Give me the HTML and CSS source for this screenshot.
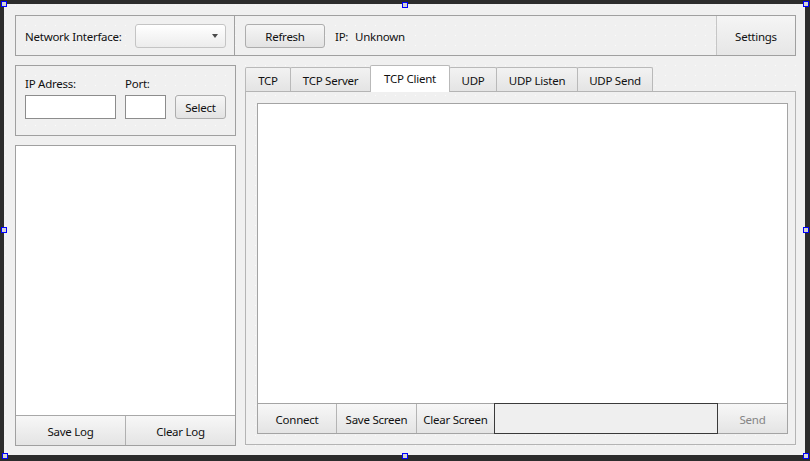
FILE: index.html
```html
<!DOCTYPE html>
<html>
<head>
<meta charset="utf-8">
<link rel="stylesheet" href="styles.css">
</head>
<body>
<div class="form">
  <div class="topbar">
    <div class="cell cell-iface">
      <span class="lbl-iface">Network Interface:</span>
      <div class="combo"><span class="arrow"></span></div>
    </div>
    <div class="cell cell-ip">
      <div class="btn btn-refresh">Refresh</div>
      <span class="ip-lbl">IP:</span>
      <span>Unknown</span>
    </div>
    <div class="settings">Settings</div>
  </div>
  <div class="main">
    <div class="leftcol">
      <div class="ipbox">
        <span class="lbl">IP Adress:</span>
        <span class="lbl">Port:</span>
        <span></span>
        <div class="edit"></div>
        <div class="edit"></div>
        <div class="btn">Select</div>
      </div>
      <div class="logbox">
        <div class="logarea"></div>
        <div class="logbtns">
          <div class="flatbtn">Save Log</div>
          <div class="flatbtn">Clear Log</div>
        </div>
      </div>
    </div>
    <div class="tabwidget">
      <div class="tabbar">
        <div class="tab w-tcp">TCP</div>
        <div class="tab w-tcps">TCP Server</div>
        <div class="tab tab-sel w-tcpc">TCP Client</div>
        <div class="tab w-udp">UDP</div>
        <div class="tab w-udpl">UDP Listen</div>
        <div class="tab w-udps">UDP Send</div>
      </div>
      <div class="pane">
        <div class="console">
          <div class="screen"></div>
          <div class="cmdrow">
            <div class="flatbtn b-connect">Connect</div>
            <div class="flatbtn b-save">Save Screen</div>
            <div class="flatbtn b-clear">Clear Screen</div>
            <div class="cmdinput"></div>
            <div class="flatbtn b-send">Send</div>
          </div>
        </div>
      </div>
    </div>
  </div>
</div>
<span class="handle h-tl"></span>
<span class="handle h-tm"></span>
<span class="handle h-tr"></span>
<span class="handle h-ml"></span>
<span class="handle h-mr"></span>
<span class="handle h-bl"></span>
<span class="handle h-bm"></span>
<span class="handle h-br"></span>
</body>
</html>
```

FILE: styles.css
```css
* { box-sizing: border-box; }
html, body {
  margin: 0;
  width: 810px;
  height: 461px;
  overflow: hidden;
  background: #2c2c2c;
  font-family: "Noto Sans", "Open Sans", sans-serif;
  font-size: 11.5px;
  letter-spacing: -0.25px;
  color: #111;
}
body { position: relative; padding: 4px 0 0 4px; }

.form {
  width: 801px;
  height: 451px;
  padding: 11px 9px 0 11px;
  background-color: #f0f0f0;
  background-image: radial-gradient(circle at 0.5px 0.5px, #fbfbfb 0.8px, transparent 1px);
  background-size: 10px 10px;
  background-position: 1px 1px;
}

/* top bar */
.topbar {
  display: flex;
  width: 781px;
  height: 41px;
  border: 1px solid #a0a0a0;
}
.cell { display: flex; align-items: center; padding-top: 1px; }
.cell-iface {
  width: 219px;
  padding-left: 9px;
  border-right: 1px solid #a0a0a0;
}
.lbl-iface { width: 110px; white-space: nowrap; }
.combo {
  position: relative;
  width: 91px;
  height: 24px;
  border: 1px solid #c4c4c4;
  border-radius: 3px;
  background: linear-gradient(#ffffff, #ececec);
  display: flex;
  align-items: center;
  justify-content: flex-end;
  padding-right: 7px;
}
.arrow {
  width: 0; height: 0;
  border-left: 3.5px solid transparent;
  border-right: 3.5px solid transparent;
  border-top: 4px solid #4a4a4a;
}
.cell-ip { flex: 1; padding-left: 10px; }
.btn {
  height: 24px;
  border: 1px solid #adadad;
  border-radius: 3px;
  background: linear-gradient(#f6f6f6, #e3e3e3);
  display: flex;
  align-items: center;
  justify-content: center;
  white-space: nowrap;
}
.btn-refresh { width: 80px; padding-top: 1px; }
.ip-lbl { margin-left: 10px; width: 20px; }
.settings {
  width: 79px;
  border-left: 1px solid #c6c6c6;
  background: linear-gradient(#f5f5f5, #e6e6e6);
  display: flex;
  align-items: center;
  justify-content: center;
  padding-top: 1px;
}

/* main */
.main { display: flex; gap: 9px; margin-top: 9px; }
.leftcol { width: 221px; display: flex; flex-direction: column; gap: 9px; }
.ipbox {
  height: 71px;
  border: 1px solid #a0a0a0;
  padding: 9px 0 0 9px;
  display: grid;
  grid-template-columns: 91px 41px 51px;
  grid-template-rows: 16px 24px;
  column-gap: 9px;
  row-gap: 4px;
}
.lbl { line-height: 17px; white-space: nowrap; }
.edit { background: #fff; border: 1px solid #8c8c8c; }

.logbox {
  height: 301px;
  border: 1px solid #a0a0a0;
  display: flex;
  flex-direction: column;
}
.logarea { flex: 1; background: #fff; border-bottom: 1px solid #a8a8a8; }
.logbtns { height: 29px; display: flex; }
.logbtns .flatbtn { flex: 1; }
.logbtns .flatbtn + .flatbtn { border-left: 1px solid #b0b0b0; }

.flatbtn {
  background: linear-gradient(#f7f7f7, #e4e4e4);
  display: flex;
  align-items: center;
  justify-content: center;
  white-space: nowrap;
  padding-top: 1px;
}

/* tabs */
.tabwidget { width: 551px; display: flex; flex-direction: column; }
.tabbar { height: 26px; display: flex; align-items: flex-end; }
.tab {
  height: 24px;
  border: 1px solid #b9b9b9;
  border-bottom: none;
  border-radius: 2px 2px 0 0;
  background: linear-gradient(#f2f2f2, #e4e4e4);
  display: flex;
  align-items: center;
  justify-content: center;
  white-space: nowrap;
  padding-top: 2px;
}
.tab + .tab { margin-left: -1px; }
.tab-sel {
  position: relative;
  z-index: 1;
  height: 27px;
  margin-bottom: -1px;
  background: #fff;
  padding-top: 0;
  padding-bottom: 1px;
}
.w-tcp { width: 46px; }
.w-tcps { width: 81px; }
.w-tcpc { width: 80px; }
.w-udp { width: 48px; }
.w-udpl { width: 82px; }
.w-udps { width: 76px; }

.pane {
  height: 354px;
  border: 1px solid #b4b4b4;
  padding: 11px 7px 10px 11px;
}
.console {
  width: 531px;
  height: 331px;
  border: 1px solid #a4a4a4;
  display: flex;
  flex-direction: column;
}
.screen { height: 300px; background: #fff; border-bottom: 1px solid #a4a4a4; }
.cmdrow { height: 29px; display: flex; }
.b-connect { width: 79px; border-right: 1px solid #b4b4b4; }
.b-save { width: 80px; border-right: 1px solid #b4b4b4; }
.b-clear { width: 77px; }
.cmdinput {
  position: relative;
  z-index: 1;
  width: 224px;
  margin: -1px 0;
  border: 1px solid #3a3a3a;
  background: #efefef;
}
.b-send { width: 69px; color: #858585; }

/* selection handles */
.handle {
  position: absolute;
  width: 6px;
  height: 6px;
  border: 1px solid #0000ff;
  background: #d4d4d4;
}
.h-tl { left: 1px; top: 1px; }
.h-tm { left: 402px; top: 2px; }
.h-tr { left: 803px; top: 1px; }
.h-ml { left: 1px; top: 227px; }
.h-mr { left: 803px; top: 227px; }
.h-bl { left: 2px; top: 453px; }
.h-bm { left: 402px; top: 453px; }
.h-br { left: 803px; top: 453px; }
```
